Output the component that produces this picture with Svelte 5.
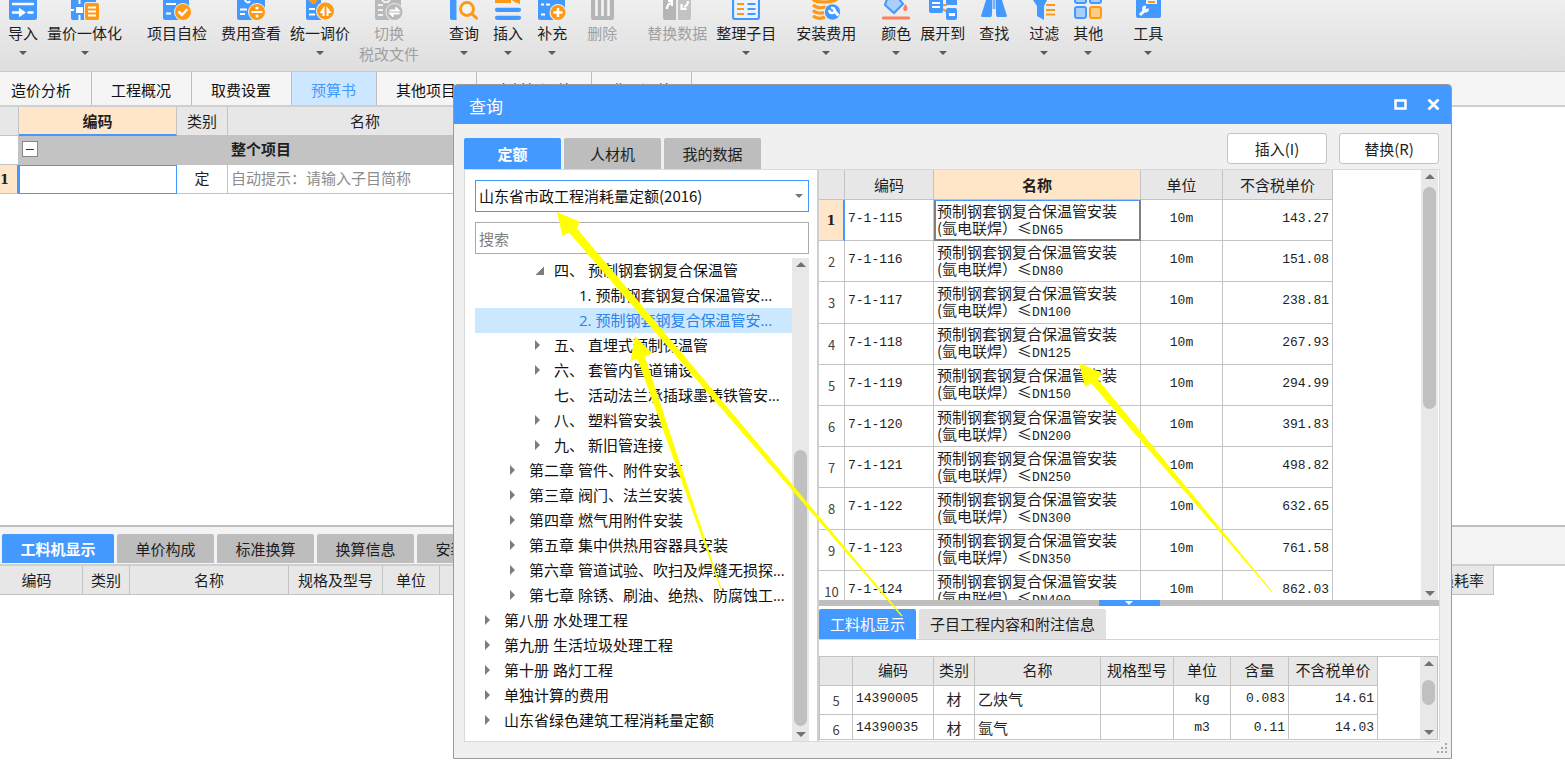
<script>
  const tools = [
    { label: '导入', icon: 'import', menu: true, space: 'first' },
    { label: '量价一体化', icon: 'merge', menu: true, space: 's9' },
    { label: '项目自检', icon: 'check', space: 's25' },
    { label: '费用查看', icon: 'cost', space: 's14' },
    { label: '统一调价', icon: 'adjust', menu: true, space: 's9' },
    { label: '切换', second: '税改文件', icon: 'switch', disabled: true, space: 's9' },
    { label: '查询', icon: 'query', menu: true, space: 's30' },
    { label: '插入', icon: 'insert', menu: true, space: 's14' },
    { label: '补充', icon: 'supply', menu: true, space: 's14' },
    { label: '删除', icon: 'delete', disabled: true, space: 's20' },
    { label: '替换数据', icon: 'replace', disabled: true, space: 's30' },
    { label: '整理子目', icon: 'arrange', menu: true, space: 's9' },
    { label: '安装费用', icon: 'install', menu: true, space: 's20' },
    { label: '颜色', icon: 'color', menu: true, space: 's25' },
    { label: '展开到', icon: 'expand', menu: true, space: 's9' },
    { label: '查找', icon: 'find', space: 's14' },
    { label: '过滤', icon: 'filter', menu: true, space: 's20' },
    { label: '其他', icon: 'other', menu: true, space: 's14' },
    { label: '工具', icon: 'tool', menu: true, space: 's30' }
  ];

  const pageTabs = ['造价分析', '工程概况', '取费设置', '预算书', '其他项目', '人材机汇总', '费用汇总'];
  const detailTabs = ['工料机显示', '单价构成', '标准换算', '换算信息', '安装费用', '特征及内容'];
  const queryTabs = ['定额', '人材机', '我的数据'];

  const tree = [
    { level: 2, state: 'open', text: '四、 预制钢套钢复合保温管' },
    { level: 3, state: 'leaf', text: '1. 预制钢套钢复合保温管安...' },
    { level: 3, state: 'leaf', text: '2. 预制钢套钢复合保温管安...', selected: true },
    { level: 2, state: 'closed', text: '五、 直埋式预制保温管' },
    { level: 2, state: 'closed', text: '六、 套管内管道铺设' },
    { level: 2, state: 'leaf', text: '七、 活动法兰承插球墨铸铁管安...' },
    { level: 2, state: 'closed', text: '八、 塑料管安装' },
    { level: 2, state: 'closed', text: '九、 新旧管连接' },
    { level: 1, state: 'closed', text: '第二章 管件、附件安装' },
    { level: 1, state: 'closed', text: '第三章 阀门、法兰安装' },
    { level: 1, state: 'closed', text: '第四章 燃气用附件安装' },
    { level: 1, state: 'closed', text: '第五章 集中供热用容器具安装' },
    { level: 1, state: 'closed', text: '第六章 管道试验、吹扫及焊缝无损探...' },
    { level: 1, state: 'closed', text: '第七章 除锈、刷油、绝热、防腐蚀工...' },
    { level: 0, state: 'closed', text: '第八册 水处理工程' },
    { level: 0, state: 'closed', text: '第九册 生活垃圾处理工程' },
    { level: 0, state: 'closed', text: '第十册 路灯工程' },
    { level: 0, state: 'closed', text: '单独计算的费用' },
    { level: 0, state: 'closed', text: '山东省绿色建筑工程消耗量定额' }
  ];

  const quotas = [
    ['7-1-115', 'DN65', '143.27'],
    ['7-1-116', 'DN80', '151.08'],
    ['7-1-117', 'DN100', '238.81'],
    ['7-1-118', 'DN125', '267.93'],
    ['7-1-119', 'DN150', '294.99'],
    ['7-1-120', 'DN200', '391.83'],
    ['7-1-121', 'DN250', '498.82'],
    ['7-1-122', 'DN300', '632.65'],
    ['7-1-123', 'DN350', '761.58'],
    ['7-1-124', 'DN400', '862.03']
  ];

  const materials = [
    { no: 5, code: '14390005', kind: '材', name: '乙炔气', unit: 'kg', qty: '0.083', price: '14.61' },
    { no: 6, code: '14390035', kind: '材', name: '氩气', unit: 'm3', qty: '0.11', price: '14.03' }
  ];

  let library = $state('山东省市政工程消耗量定额(2016)');
  let keyword = $state('');
</script>

{#snippet glyph(name)}
  <svg class="glyph" viewBox="0 0 28 20" width="28" height="20" aria-hidden="true">
    {#if name === 'import'}
      <path d="M0 0h28v18a2 2 0 0 1-2 2H2a2 2 0 0 1-2-2z" fill="#4499ff" />
      <path d="M4 4h20" stroke="#fff" stroke-width="2.400" stroke-linecap="round" />
      <path d="M4 12.500h8M19.500 12.500h4" stroke="#fff" stroke-width="2.600" stroke-linecap="round" />
      <path d="M10 7.800l7 4.700-7 4.700z" fill="#fff" />
    {:else if name === 'merge'}
      <path d="M0 0h25v20H2a2 2 0 0 1-2-2z" fill="#4499ff" />
      <path d="M5 7h7v6H5zM7.500 0h2v4h-2zM7.500 15h2v5h-2zM0 9h3v2H0z" fill="#fff" />
      <rect x="13" y="2" width="16" height="19" rx="3" fill="#eee" />
      <rect x="14" y="3" width="14" height="17" rx="2" fill="#ff9914" />
      <path d="M17 7.500h8M17 11.500h8M17 15.500h8" stroke="#fff" stroke-width="2" />
    {:else if name === 'check'}
      <path d="M0 0h26v8l-4 12H2a2 2 0 0 1-2-2z" fill="#4499ff" />
      <path d="M3 4h10M3 13.500h5" stroke="#fff" stroke-width="2" />
      <circle cx="20" cy="12" r="9" fill="#f0f0f0" /><circle cx="20" cy="12" r="8" fill="#ff9914" />
      <path d="M15.500 11.500l3.500 3.500 5.500-6" fill="none" stroke="#fff" stroke-width="2.500" />
    {:else if name === 'cost'}
      <path d="M0 0h28v8l-6 12H2a2 2 0 0 1-2-2z" fill="#4499ff" />
      <path d="M8 0c1 3 4 3 5 1M3 9.500h7M3 14h5" fill="none" stroke="#fff" stroke-width="2" />
      <circle cx="20" cy="12" r="9" fill="#f0f0f0" /><circle cx="20" cy="12" r="8" fill="#ff9914" />
      <path d="M14.500 12h11" stroke="#fff" stroke-width="2" />
      <circle cx="20" cy="8" r="1.600" fill="#fff" /><circle cx="20" cy="16" r="1.600" fill="#fff" />
    {:else if name === 'adjust'}
      <path d="M0 0h3l4 4 4-4h4v20H2a2 2 0 0 1-2-2z" fill="#4499ff" />
      <path d="M3 0h9l-1 1-2 3H6L4 1z" fill="#ff9914" />
      <path d="M3 9h6M3 14.500h6" stroke="#fff" stroke-width="2" />
      <circle cx="19.500" cy="11" r="9.500" fill="#f0f0f0" /><circle cx="19.500" cy="11" r="8.500" fill="#ff9914" />
      <path d="M18.500 6v10h-2v-3h-3zM20.500 16V6l5 7h-3v3z" fill="#fff" />
    {:else if name === 'switch'}
      <path d="M0 0h26v8l-5 12H2a2 2 0 0 1-2-2z" fill="#b9b9b9" />
      <path d="M7 0c2 3 6 3 8 0M3 5h5M3 10h5M3 15h5" fill="none" stroke="#f0f0f0" stroke-width="2" />
      <circle cx="19.500" cy="12" r="9" fill="#ececec" /><circle cx="19.500" cy="12" r="8" fill="#b9b9b9" />
      <path d="M14.500 10.500h9l-3-3M24.500 13.500h-9l3 3" fill="none" stroke="#fff" stroke-width="2" />
    {:else if name === 'query'}
      <path d="M0 0h6.500v20H2a2 2 0 0 1-2-2z" fill="#4499ff" />
      <circle cx="17" cy="9" r="6.500" fill="#f3f3f3" stroke="#ff9914" stroke-width="2.800" />
      <path d="M21.500 13.500l6 5.500" stroke="#ff9914" stroke-width="3" />
    {:else if name === 'insert'}
      <path d="M1 0h16v3H1zM18 0h8v4l-6-2z" fill="#ff9914" />
      <path d="M3 9.800h22M3 17.800h22" stroke="#4499ff" stroke-width="4.200" stroke-linecap="round" />
    {:else if name === 'supply'}
      <path d="M0 0h27v8l-5 12H2a2 2 0 0 1-2-2z" fill="#4499ff" />
      <path d="M3 4.500h3M8 4.500h4M3 14.500h4" stroke="#fff" stroke-width="2" />
      <circle cx="20" cy="12.500" r="8.500" fill="#f0f0f0" /><circle cx="20" cy="12.500" r="7.500" fill="#ff9914" />
      <path d="M15.500 12.500h9M20 8v9" stroke="#fff" stroke-width="2.500" />
    {:else if name === 'delete'}
      <path d="M3 0h23v18a2 2 0 0 1-2 2H5a2 2 0 0 1-2-2z" fill="#b5b5b5" />
      <path d="M8.500 0v16M14.500 0v16M20.500 0v16" stroke="#f4f4f4" stroke-width="2.600" />
    {:else if name === 'replace'}
      <path d="M0 0h13v20H2a2 2 0 0 1-2-2z" fill="#b5b5b5" />
      <path d="M15 0h13v18a2 2 0 0 1-2 2H15z" fill="#c3c3c3" />
      <path d="M4 9c0-3 1-5 4-6M5 1h4v5M25 1c0 3-1 5-4 6M18.500 4v5h5" fill="none" stroke="#fff" stroke-width="2.200" />
    {:else if name === 'arrange'}
      <path d="M1 -2h26v19a2 2 0 0 1-2 2H3a2 2 0 0 1-2-2z" fill="#e8f3ff" stroke="#4499ff" stroke-width="2.200" />
      <path d="M5 4h7M5 9h7M5 14h7" stroke="#ff9914" stroke-width="2.200" />
      <path d="M15.500 4h8M15.500 9h8M15.500 14h8" stroke="#4499ff" stroke-width="2.200" />
    {:else if name === 'install'}
      <path d="M1 -1c2 4 20 4 24 0M1 5c3 3 9 3 13 2M1 10.500c3 3 8 3 11 2M1 16c3 2 8 3 12 1" fill="none" stroke="#ff9914" stroke-width="3.200" />
      <circle cx="20.500" cy="12" r="8.500" fill="#f0f0f0" /><circle cx="20.500" cy="12" r="7.700" fill="#4499ff" />
      <path d="M22 10.500l4.500 5" stroke="#fff" stroke-width="3" />
      <circle cx="20" cy="10.500" r="3.800" fill="#fff" /><path d="M20 10.500l-5-1 3-4.500z" fill="#4499ff" />
      <circle cx="20" cy="10.500" r="1.300" fill="#4499ff" />
    {:else if name === 'color'}
      <path d="M5 -1L3 5l9 8 9-9-4-5z" fill="#a8d0fb" stroke="#4499ff" stroke-width="2.200" />
      <path d="M23.500 4c3 4 2 7 0 7s-4-2 0-7z" fill="#ff7f5c" />
      <path d="M1.500 18h25" stroke="#ff7f5c" stroke-width="3.200" stroke-linecap="round" />
    {:else if name === 'expand'}
      <path d="M14 5h4M14 9l5 4" stroke="#ff9914" stroke-width="2" />
      <path d="M0 0h14v11a2 2 0 0 1-2 2H2a2 2 0 0 1-2-2z" fill="#4499ff" />
      <path d="M3 3h8M3 7h8" stroke="#fff" stroke-width="1.800" />
      <path d="M17 0h11v5h-9a2 2 0 0 1-2-2z" fill="#4499ff" />
      <rect x="17" y="8" width="11" height="12" rx="2" fill="#4499ff" /><path d="M20 13h6v3h-6z" fill="#fff" />
    {:else if name === 'find'}
      <path d="M6 0h6v15l-1 2H2l-1-1zM16 0h6l5 16-1 1h-9l-1-2z" fill="#4499ff" />
      <path d="M12.500 0h3v9h-3z" fill="#77b4fb" />
    {:else if name === 'filter'}
      <path d="M3 0h14l-3 6v14l-7-4V6z" fill="#4499ff" />
      <path d="M16 5h9M16 10h9M16 14.500h9" stroke="#ff9914" stroke-width="2" />
    {:else if name === 'other'}
      <path d="M1 0v1a2 2 0 0 0 2 2h7a2 2 0 0 0 2-2V0M16 0v1a2 2 0 0 0 2 2h7a2 2 0 0 0 2-2V0" fill="#a8d0fb" stroke="#4499ff" stroke-width="2" />
      <rect x="1" y="7" width="11" height="11" rx="2" fill="#a8d0fb" stroke="#4499ff" stroke-width="2" />
      <rect x="16" y="7" width="11" height="11" rx="2" fill="#ffcc85" stroke="#ff9914" stroke-width="2" />
    {:else}
      <path d="M2 0h25v16a2 2 0 0 1-2 2H4a2 2 0 0 1-2-2z" fill="#4499ff" />
      <path d="M12 0h11v4H12z" fill="#e9f3ff" /><path d="M14 2h7" stroke="#ff9914" stroke-width="2" />
      <path d="M6 15l5-5" stroke="#fff" stroke-width="3" /><circle cx="11.500" cy="9" r="3.400" fill="#fff" />
      <path d="M11.500 9l1-5 4 4z" fill="#4499ff" />
    {/if}
  </svg>
{/snippet}

{#snippet scrollbar(kind)}
  <div class="scroll {kind}" aria-hidden="true">
    <span class="up"></span>
    <span class="thumb"></span>
    <span class="down"></span>
  </div>
{/snippet}

<div class="app">
  <header class="toolbar">
    {#each tools as tool}
      <button class="tool {tool.space}" disabled={tool.disabled}>
        {@render glyph(tool.icon)}
        <span class="caption">{tool.label}</span>
        {#if tool.second}<span class="second">{tool.second}</span>{/if}
        {#if tool.menu}<span class="caret"></span>{/if}
      </button>
    {/each}
  </header>

  <nav class="page-tabs">
    {#each pageTabs as tab}
      <button class:active={tab === '预算书'}>{tab}</button>
    {/each}
  </nav>

  <section class="budget">
    <table class="grid">
      <colgroup><col class="b-no" /><col class="b-code" /><col class="b-kind" /><col class="b-name" /></colgroup>
      <thead>
        <tr><th></th><th class="current">编码</th><th>类别</th><th>名称</th></tr>
      </thead>
      <tbody>
        <tr class="project">
          <td class="blank"></td>
          <td><button class="collapse" aria-label="折叠"></button></td>
          <td></td>
          <td>整个项目</td>
        </tr>
        <tr>
          <td class="no current">1</td>
          <td class="editing"></td>
          <td class="center">定</td>
          <td class="hint">自动提示：请输入子目简称</td>
        </tr>
      </tbody>
    </table>
  </section>

  <section class="detail">
    <nav class="detail-tabs">
      {#each detailTabs as tab, i}
        <button class:active={i === 0}>{tab}</button>
      {/each}
    </nav>
    <table class="grid detail-grid">
      <colgroup>
        <col class="d-code" /><col class="d-kind" /><col class="d-name" /><col class="d-spec" /><col class="d-unit" /><col /><col class="d-loss" />
      </colgroup>
      <thead>
        <tr><th class="d-first">编码</th><th>类别</th><th>名称</th><th>规格及型号</th><th>单位</th><th></th><th>损耗率</th></tr>
      </thead>
    </table>
  </section>

  <div class="dialog" role="dialog" aria-labelledby="query-title">
    <div class="title-bar">
      <h1 id="query-title">查询</h1>
      <button aria-label="最大化">
        <svg width="13" height="11" viewBox="0 0 13 11"><rect x="1.500" y="1.500" width="10" height="8" fill="none" stroke="#fff" stroke-width="2.500" /></svg>
      </button>
      <button aria-label="关闭">
        <svg width="13" height="11" viewBox="0 0 13 11"><path d="M1.500 0.500l10 10M11.500 0.500l-10 10" stroke="#fff" stroke-width="2.800" /></svg>
      </button>
    </div>

    <div class="command-row">
      <nav class="query-tabs">
        {#each queryTabs as tab, i}
          <button class:active={i === 0}>{tab}</button>
        {/each}
      </nav>
      <button class="command">插入(I)</button>
      <button class="command">替换(R)</button>
    </div>

    <div class="content">
      <aside class="library">
        <div class="select-wrap">
          <select bind:value={library} aria-label="定额库">
            <option>山东省市政工程消耗量定额(2016)</option>
          </select>
          <span class="caret"></span>
        </div>
        <input type="text" placeholder="搜索" aria-label="搜索" bind:value={keyword} />
        <div class="tree-wrap">
          <ul class="tree">
            {#each tree as node}
              <li class="level{node.level}" class:selected={node.selected}>
                <span class="marker {node.state}"></span>{node.text}
              </li>
            {/each}
          </ul>
          {@render scrollbar('tree-scroll')}
        </div>
      </aside>

      <div class="result">
        <div class="quota-wrap">
          <div class="quota-view">
            <table class="grid quota">
              <colgroup><col class="q-no" /><col class="q-code" /><col class="q-name" /><col class="q-unit" /><col class="q-price" /></colgroup>
              <thead>
                <tr><th></th><th>编码</th><th class="current">名称</th><th>单位</th><th>不含税单价</th></tr>
              </thead>
              <tbody>
                {#each quotas as [code, size, price], i}
                  <tr>
                    <td class="no" class:current={i === 0}>{i + 1}</td>
                    <td class="mono">{code}</td>
                    <td class="name" class:focused={i === 0}>预制钢套钢复合保温管安装<br />(氩电联焊）≤<span class="mono">{size}</span></td>
                    <td class="mono center">10m</td>
                    <td class="mono number">{price}</td>
                  </tr>
                {/each}
              </tbody>
            </table>
          </div>
          {@render scrollbar('quota-scroll')}
        </div>

        <div class="splitter"><span class="handle"></span></div>

        <nav class="sub-tabs">
          <button class="active">工料机显示</button>
          <button>子目工程内容和附注信息</button>
        </nav>

        <div class="material-wrap">
          <div class="material-view">
            <table class="grid material">
              <colgroup>
                <col class="m-no" /><col class="m-code" /><col class="m-kind" /><col class="m-name" /><col class="m-spec" /><col class="m-unit" /><col class="m-qty" /><col class="m-price" />
              </colgroup>
              <thead>
                <tr><th></th><th>编码</th><th>类别</th><th>名称</th><th>规格型号</th><th>单位</th><th>含量</th><th>不含税单价</th></tr>
              </thead>
              <tbody>
                {#each materials as m}
                  <tr>
                    <td class="no">{m.no}</td>
                    <td class="mono">{m.code}</td>
                    <td class="center">{m.kind}</td>
                    <td>{m.name}</td>
                    <td></td>
                    <td class="mono center">{m.unit}</td>
                    <td class="mono number">{m.qty}</td>
                    <td class="mono number">{m.price}</td>
                  </tr>
                {/each}
              </tbody>
            </table>
          </div>
          {@render scrollbar('material-scroll')}
        </div>
      </div>
    </div>

    <svg class="grip" width="11" height="11" viewBox="0 0 11 11" aria-hidden="true">
      <path d="M8 0h2v2H8zM4 4h2v2H4zM8 4h2v2H8zM0 8h2v2H0zM4 8h2v2H4zM8 8h2v2H8z" fill="#a8a8a8" />
    </svg>

    <!-- Annotation arrows lie over the dialog -->
    <svg class="arrows" width="999" height="675" viewBox="453 84 999 675" aria-hidden="true">
      <path d="M557 212L580 222 576.500 228 902.500 615.500 901.500 616.500 569 232.500 562.500 236z" />
      <path d="M635 336L652 353 645 357 721.500 589 720.500 589 637.500 359 630.500 361z" />
      <path d="M1079 363L1102 373 1097.500 379 1272.500 591.500 1271.500 592 1091 383 1085 387z" />
    </svg>
  </div>
</div>

<style>
  :global(body) {
    margin: 0;
    background: #fff;
  }

  .app {
    --blue: #4499ff;
    --line: #c3c3c3;
    position: relative;
    display: flex;
    flex-direction: column;
    min-height: 100vh;
    overflow: hidden;
    color: #1e1e1e;
    font: 15px/20px 'Noto Sans CJK SC', sans-serif;
  }

  button {
    padding: 0;
    border: 0;
    background: none;
    color: inherit;
    font: inherit;
    white-space: nowrap;
  }

  /* Toolbar */
  .toolbar {
    display: flex;
    align-items: flex-start;
    height: 71px;
    border-bottom: 1px solid #c8c8c8;
    background: linear-gradient(#efefef, #dedede);
  }
  .tool {
    display: flex;
    flex-direction: column;
    align-items: center;
    flex: none;
  }
  .tool:disabled { color: #a0a0a0; }
  .first { margin-left: 8px; }
  .s9 { margin-left: 9px; }
  .s14 { margin-left: 14px; }
  .s20 { margin-left: 20px; }
  .s25 { margin-left: 25px; }
  .s30 { margin-left: 30px; }
  .glyph { display: block; }
  .caption { margin-top: 3px; }
  .caret {
    width: 0;
    height: 0;
    border: 4px solid transparent;
    border-top-color: #5a5a5a;
    border-bottom: 0;
  }
  .tool .caret { margin-top: 8px; }
  .second { margin-top: 1px; }

  /* Page tabs */
  .page-tabs {
    display: flex;
    height: 33px;
    border-bottom: 2px solid #cfcfcf;
    background: #f5f5f5;
  }
  .page-tabs button {
    padding: 2px 20px 0 19px;
    border-right: 1px solid #bdbdbd;
    color: #111;
  }
  .page-tabs button:first-child { padding-left: 11px; }
  .page-tabs .active {
    background: #cce7ff;
    color: var(--blue);
  }

  /* Shared grid look */
  .grid {
    table-layout: fixed;
    border-collapse: separate;
    border-spacing: 0;
  }
  .grid th,
  .grid td {
    box-sizing: border-box;
    padding: 0 3px;
    border-right: 1px solid var(--line);
    border-bottom: 1px solid var(--line);
    white-space: nowrap;
    text-align: left;
  }
  .grid th {
    height: 29px;
    background: #e7e7e7;
    font-weight: 400;
    text-align: center;
  }
  .grid .current {
    background: #ffe6c8;
    font-weight: 700;
  }
  .grid .center { text-align: center; }
  .grid .number { text-align: right; }
  .grid .mono {
    font-family: 'Liberation Mono', monospace;
    font-size: 13px;
  }
  .grid .no {
    padding: 2px 0 0;
    color: #444;
    font-size: 13px;
    text-align: center;
  }

  /* Budget grid */
  .budget { flex: 1; }
  .budget .grid { width: 503px; }
  .b-no { width: 19px; }
  .b-code { width: 158px; }
  .b-kind { width: 51px; }
  .b-name { width: 275px; }
  .budget th.current { border-bottom: 2px solid var(--blue); }
  .budget td {
    height: 29px;
    padding-bottom: 2px;
  }
  .project td {
    border-color: #c3c3c3;
    background: #c3c3c3;
    font-weight: 700;
  }
  .project .blank { background: #fff; }
  .collapse {
    display: block;
    width: 16px;
    height: 16px;
    border: 1px solid #888;
    background: linear-gradient(#333, #333) center / 8px 1px no-repeat #fff;
  }
  .grid .no.current {
    border-right: 2px solid var(--blue);
    color: #222;
    font-family: 'DejaVu Serif', serif;
  }
  .budget .no.current { text-align: left; }
  .budget .editing { border: 1px solid var(--blue); }
  .budget .hint { color: #8c8c8c; }

  /* Lower detail pane */
  .detail {
    height: 252px;
    border-top: 2px solid #bfbfbf;
    background: #fff;
  }
  .detail-tabs {
    display: flex;
    gap: 3px;
    height: 29px;
    padding: 7px 0 1px 2px;
    border-bottom: 2px solid #cfcfcf;
    background: #f3f3f3;
  }
  .detail-tabs button {
    min-width: 97px;
    border-radius: 2px 2px 0 0;
    background: #bdbdbd;
  }
  .detail-tabs .active {
    min-width: 112px;
    background: var(--blue);
    color: #fff;
    font-weight: 700;
  }
  .detail-grid { width: calc(100% - 71px); }
  .d-code { width: 83px; }
  .d-kind { width: 47px; }
  .d-name { width: 159px; }
  .d-spec { width: 94px; }
  .d-unit { width: 57px; }
  .d-loss { width: 64px; }
  .grid .d-first { padding-right: 12px; }

  /* Query dialog */
  .dialog {
    position: absolute;
    top: 84px;
    right: 113px;
    bottom: 20px;
    left: 453px;
    display: flex;
    flex-direction: column;
    box-sizing: border-box;
    border: 1px solid #9a9a9a;
    border-radius: 4px 4px 0 0;
    background: #f0f0f0;
  }
  .title-bar {
    display: flex;
    align-items: center;
    gap: 20px;
    height: 39px;
    padding: 0 11px 0 15px;
    border-radius: 3px 3px 0 0;
    background: var(--blue);
    color: #fff;
  }
  .title-bar h1 {
    flex: 1;
    margin: 3px 0 0;
    font-size: 17px;
    font-weight: 400;
  }
  .title-bar svg { display: block; }
  .command-row {
    display: flex;
    align-items: flex-end;
    gap: 12px;
    height: 45px;
    padding: 0 12px 0 10px;
  }
  .query-tabs {
    display: flex;
    flex: 1;
    gap: 3px;
  }
  .query-tabs button {
    width: 97px;
    height: 31px;
    border-radius: 2px 2px 0 0;
    background: #bdbdbd;
  }
  .query-tabs .active {
    background: var(--blue);
    color: #fff;
    font-weight: 700;
  }
  .command {
    width: 100px;
    height: 31px;
    margin-bottom: 5px;
    border: 1px solid #c4c4c4;
    border-radius: 3px;
    background: #fff;
  }
  .content {
    display: flex;
    flex: 1;
    min-height: 0;
    margin: 0 11px 16px 10px;
    border: 1px solid #d9d9d9;
    background: #fff;
  }

  /* Library side */
  .library {
    display: flex;
    flex-direction: column;
    flex: none;
    box-sizing: border-box;
    width: 352px;
    padding: 10px 8px 0 10px;
  }
  .select-wrap {
    display: grid;
    align-items: center;
  }
  .select-wrap > * { grid-area: 1 / 1; }
  .select-wrap .caret {
    justify-self: end;
    margin-right: 6px;
    border-top-color: #777;
    pointer-events: none;
  }
  select,
  input {
    box-sizing: border-box;
    width: 100%;
    height: 32px;
    padding: 0 3px;
    border: 1px solid var(--blue);
    border-radius: 0;
    background: #fff;
    color: #111;
    font: inherit;
    appearance: none;
    outline: none;
  }
  input {
    margin-top: 10px;
    border-color: #ababab;
  }
  input::placeholder { color: #808080; }
  .tree-wrap {
    display: flex;
    flex: 1;
    min-height: 0;
    margin-top: 4px;
  }
  .tree {
    flex: 1;
    margin: 0;
    padding: 0;
    overflow: hidden;
    list-style: none;
  }
  .tree li {
    display: flex;
    align-items: center;
    box-sizing: border-box;
    height: 25px;
    padding-bottom: 1px;
    color: #111;
    font-family: 'Open Sans', 'Noto Sans CJK SC', sans-serif;
    white-space: pre;
  }
  .tree .selected {
    background: #cce8ff;
    color: #2a84ea;
  }
  .level0 { padding-left: 10px; }
  .level1 { padding-left: 35px; }
  .level2 { padding-left: 60px; }
  .level3 { padding-left: 85px; }
  .marker {
    flex: none;
    box-sizing: border-box;
    width: 5px;
    height: 10px;
    margin-right: 14px;
  }
  .closed {
    border: 5px solid transparent;
    border-right: 0;
    border-left-color: #7d7d7d;
  }
  .open {
    width: 9px;
    height: 9px;
    margin-right: 10px;
    background: linear-gradient(135deg, transparent 50%, #7d7d7d 50%);
  }

  /* Scrollbars */
  .scroll {
    display: flex;
    flex-direction: column;
    align-items: center;
    flex: none;
    width: 17px;
    background: #e8e8e8;
  }
  .up,
  .down {
    flex: none;
    border: 5px solid transparent;
  }
  .up {
    margin-top: 4px;
    border-top: 0;
    border-bottom: 5px solid #70707a;
  }
  .down {
    margin: auto 0 4px;
    border-bottom: 0;
    border-top: 5px solid #70707a;
  }
  .thumb {
    width: 13px;
    border-radius: 7px;
    background: #c0c0c0;
  }
  .tree-scroll .thumb { height: 276px; margin-top: 183px; }
  .quota-scroll .thumb { height: 222px; margin-top: 8px; }
  .material-scroll .thumb { height: 25px; margin-top: 14px; }

  /* Result side */
  .result {
    display: flex;
    flex-direction: column;
    flex: 1;
    min-width: 0;
    border-left: 2px solid #cfcfcf;
  }
  .quota-wrap {
    display: flex;
    flex: 1;
    min-height: 0;
    padding-right: 1px;
  }
  .quota-view {
    flex: 1;
    overflow: hidden;
  }
  .quota {
    width: 514px;
    height: 442px;
  }
  .q-no { width: 26px; }
  .q-code { width: 89px; }
  .q-name { width: 207px; }
  .q-unit { width: 82px; }
  .q-price { width: 110px; }
  .quota thead th { height: 30px; }
  .quota td.name {
    padding-bottom: 2px;
    line-height: 17px;
  }
  .quota .name .mono { line-height: 1; }
  .quota td.mono { padding-bottom: 2px; }
  .quota .focused { box-shadow: inset 0 1px var(--blue), inset 2px 0 #808080, inset -1px -1px #808080; }
  .quota td.focused {
    border-right-color: #808080;
    border-bottom-color: #808080;
  }
  .splitter {
    display: flex;
    justify-content: center;
    height: 6px;
    background: #bfbfbf;
  }
  .handle {
    display: flex;
    justify-content: center;
    width: 61px;
    background: var(--blue);
  }
  .handle::after {
    content: '';
    height: 0;
    margin-top: 1px;
    border: 4px solid transparent;
    border-top-color: #fff;
    border-bottom: 0;
  }
  .sub-tabs {
    display: flex;
    gap: 3px;
    height: 30px;
    padding-top: 3px;
    border-bottom: 1px solid #d4d4d4;
  }
  .sub-tabs button {
    padding: 0 11px;
    border-radius: 2px 2px 0 0;
    background: #e0e0e0;
  }
  .sub-tabs .active {
    background: var(--blue);
    color: #fff;
  }
  .material-wrap {
    display: flex;
    height: 82px;
    margin: 16px 1px 1px 0;
    border: 1px solid var(--line);
  }
  .material-view {
    flex: 1;
    overflow: hidden;
  }
  .material { width: 558px; }
  .m-no { width: 33px; }
  .m-code { width: 81px; }
  .m-kind { width: 41px; }
  .m-name { width: 126px; }
  .m-spec { width: 73px; }
  .m-unit { width: 57px; }
  .m-qty { width: 58px; }
  .m-price { width: 89px; }
  .material td { height: 29px; }
  .material th,
  .material td:not(.no) { padding-bottom: 2px; }

  .grip {
    position: absolute;
    right: 3px;
    bottom: 4px;
  }
  .arrows {
    position: absolute;
    top: -1px;
    left: -1px;
    fill: #ffff00;
    pointer-events: none;
  }
</style>
